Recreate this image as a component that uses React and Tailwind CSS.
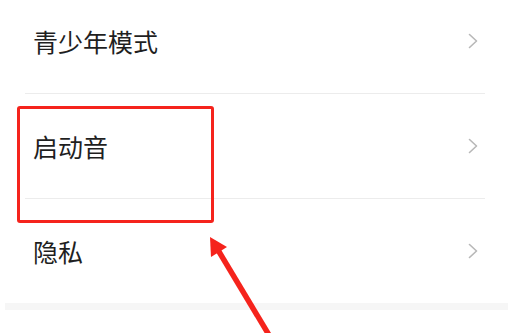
import React from "react";

const items = ["青少年模式", "启动音", "隐私"];

const Chevron = () => (
  <svg width="10" height="16" viewBox="0 0 10 16" className="shrink-0">
    <polyline
      points="1.5,1.5 8.5,8 1.5,14.5"
      fill="none"
      stroke="#b8b8b8"
      strokeWidth="1.6"
      strokeLinecap="round"
      strokeLinejoin="round"
    />
  </svg>
);

const App = () => {
  return (
    <div
      className="relative w-[513px] h-[333px] overflow-hidden bg-white"
      style={{ fontFamily: '"Noto Sans CJK SC", "Noto Sans", sans-serif' }}
    >
      <div className="-mt-[11px] flex flex-col">
        {items.map((label, i) => (
          <div key={label} className="flex flex-col">
            <div className="h-[104px] flex items-center justify-between pl-[33px] pr-[35px]">
              <span className="text-[25px] leading-none text-[#1f1f1f]">
                {label}
              </span>
              <Chevron />
            </div>
            {i < items.length - 1 && (
              <div className="ml-[25px] mr-[28px] h-px bg-[#ececec]" />
            )}
          </div>
        ))}
        <div className="mx-[5px] h-[7px] bg-[#f6f6f6]" />
      </div>

      {/* highlight box */}
      <div className="absolute left-[17px] top-[106px] w-[197px] h-[117px] border-[3px] border-[#f5231c] rounded-[3px]" />

      {/* arrow */}
      <svg
        className="absolute inset-0 pointer-events-none"
        width="513"
        height="333"
        viewBox="0 0 513 333"
      >
        <line
          x1="218"
          y1="250"
          x2="272"
          y2="340"
          stroke="#f5231c"
          strokeWidth="5.5"
        />
        <polygon points="210,237 211,257 227,247" fill="#f5231c" />
      </svg>
    </div>
  );
};

export default App;
